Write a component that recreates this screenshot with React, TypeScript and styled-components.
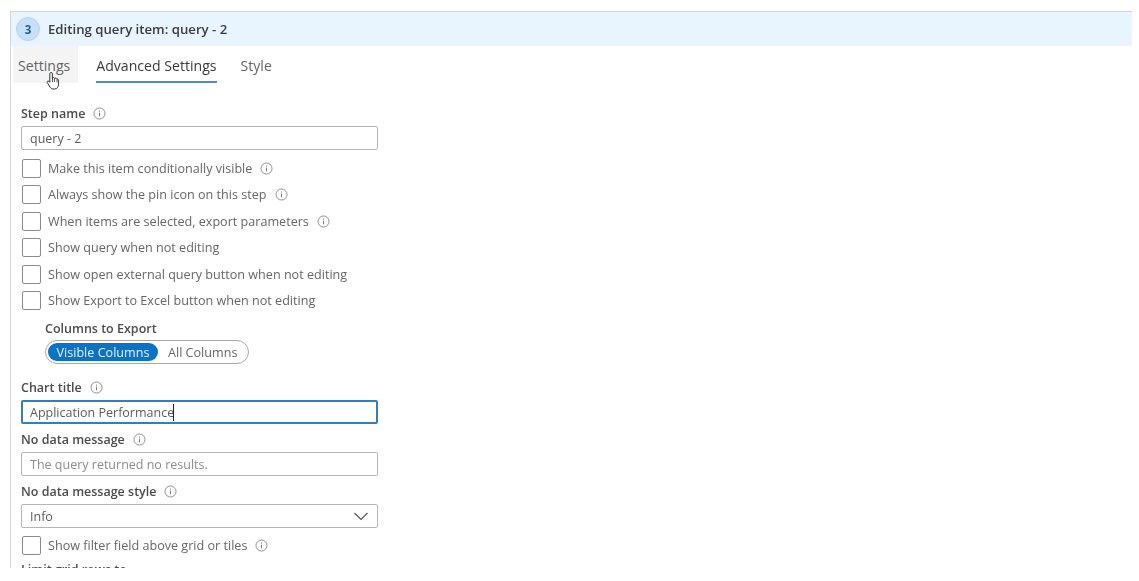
import React from "react";
import styled, { createGlobalStyle } from "styled-components";

const Global = createGlobalStyle`
  html, body { margin: 0; padding: 0; background: #fff; }
  body { font-family: "Open Sans", "Noto Sans", sans-serif; color: #4a4a4a; overflow: hidden; }
`;

const Frame = styled.div`
  height: 568px;
  padding: 11px 7px 0 10px;
  box-sizing: border-box;
  overflow: hidden;
  filter: blur(0.55px);
`;

const Panel = styled.div`
  height: 100%;
  border-left: 1px solid #d6d6dc;
  border-top: 1px solid #d3d3dc;
`;

const Header = styled.div`
  height: 34px;
  background: #e8f4fe;
  display: flex;
  align-items: center;
  gap: 8px;
  padding-left: 5px;
`;

const Badge = styled.span`
  width: 24px;
  height: 24px;
  border-radius: 50%;
  background: #c8e0f7;
  border: 1px solid #b4d4f0;
  box-sizing: border-box;
  color: #1a5f9e;
  font-size: 11.5px;
  font-weight: 700;
  display: flex;
  align-items: center;
  justify-content: center;
`;

const HeaderTitle = styled.span`
  font-size: 13.2px;
  font-weight: 600;
  color: #3c3c44;
`;

const Tabs = styled.div`
  display: flex;
  height: 37px;
  padding-left: 2px;
`;

const Tab = styled.div<{ $active?: boolean; $hover?: boolean }>`
  position: relative;
  font-size: 14.1px;
  line-height: 39px;
  padding: 0 ${(p) => (p.$hover ? "8px" : "12px")} 0 ${(p) => (p.$hover ? "5px" : "0")};
  margin-left: ${(p) => (p.$hover ? "0" : "12px")};
  margin-right: ${(p) => (p.$hover ? "6px" : "0")};
  color: ${(p) => (p.$active ? "#3a3a3a" : "#666")};
  font-weight: ${(p) => (p.$active ? 500 : 400)};
  background: ${(p) => (p.$hover ? "#f4f4f4" : "transparent")};
  ${(p) =>
    p.$active &&
    `&::after { content: ""; position: absolute; left: 0; right: 12px; bottom: 0; height: 2px; background: #4a90c8; }`}
`;

const Cursor = styled.svg`
  position: absolute;
  left: 33px;
  top: 25px;
  width: 16px;
  height: 20px;
`;

const Form = styled.div`
  display: flex;
  flex-direction: column;
  padding: 22px 0 0 10px;
  width: 357px;
`;

const Label = styled.div<{ $indent?: boolean }>`
  display: flex;
  align-items: center;
  gap: 8px;
  height: 17px;
  font-size: 12.5px;
  font-weight: 600;
  color: #4c4c4c;
  margin-left: ${(p) => (p.$indent ? "24px" : "0")};
`;

const Info = styled.svg`
  width: 13px;
  height: 13px;
  flex: none;
  color: #777;
`;

const Field = styled.div<{ $focus?: boolean; $placeholder?: boolean }>`
  height: 24px;
  box-sizing: border-box;
  border: 1px solid #b5b5b5;
  border-radius: 2px;
  display: flex;
  align-items: center;
  padding: 0 8px;
  font-size: 12.5px;
  background: #fff;
  margin-top: 4px;
  color: ${(p) => (p.$placeholder ? "#8c8c8c" : "#5c5c5c")};
  ${(p) => p.$focus && "border: 2px solid #2f7fc1; padding: 0 7px;"}
`;

const Caret = styled.span`
  display: inline-block;
  width: 1px;
  height: 17px;
  background: #222;
  margin-left: -1px;
`;

const SelectBox = styled(Field)`
  justify-content: space-between;
  padding-right: 8px;
`;

const Row = styled.div`
  display: flex;
  align-items: center;
  height: 26.5px;
  font-size: 12.6px;
  color: #666;
`;

const Checkbox = styled.span`
  width: 19px;
  height: 19px;
  box-sizing: border-box;
  border: 1.5px solid #8a8a8a;
  border-radius: 2px;
  margin: 0 7px 0 1px;
  flex: none;
`;

const RowText = styled.span`
  margin-right: 8px;
`;

const Checks = styled.div`
  margin-top: 5px;
  margin-bottom: 6px;
`;

const Pill = styled.div`
  margin: 3px 0 15px 24px;
  width: 204px;
  height: 24px;
  box-sizing: border-box;
  border: 1px solid #a8a8a8;
  border-radius: 12px;
  display: flex;
  align-items: center;
  padding: 0 2px;
  font-size: 12.6px;
  color: #666;
`;

const PillOn = styled.span`
  width: 110px;
  height: 18px;
  border-radius: 9px;
  background: #0b72c6;
  color: #e4f1fb;
  display: flex;
  align-items: center;
  justify-content: center;
  margin-right: 10px;
`;

const Section = styled.div<{ $top?: number }>`
  margin-top: ${(p) => p.$top ?? 0}px;
`;

const FilterRow = styled(Row)`
  margin-top: 4px;
`;

const Clipped = styled.div`
  height: 8px;
  margin-top: 2px;
  font-size: 12.5px;
  font-weight: 600;
  color: #4c4c4c;
  line-height: 17px;
`;

const InfoIcon = () => (
  <Info viewBox="0 0 16 16" fill="none" stroke="currentColor">
    <circle cx="8" cy="8" r="6.8" strokeWidth="1" />
    <path d="M8 7v4.4" strokeWidth="1.2" />
    <path d="M8 4.4v1.3" strokeWidth="1.2" />
  </Info>
);

const checks: [string, boolean][] = [
  ["Make this item conditionally visible", true],
  ["Always show the pin icon on this step", true],
  ["When items are selected, export parameters", true],
  ["Show query when not editing", false],
  ["Show open external query button when not editing", false],
  ["Show Export to Excel button when not editing", false],
];

export default function App() {
  return (
    <>
      <Global />
      <Frame>
        <Panel>
          <Header>
            <Badge>3</Badge>
            <HeaderTitle>Editing query item: query - 2</HeaderTitle>
          </Header>
          <Tabs>
            <Tab $hover>
              Settings
              <Cursor viewBox="0 0 16 20" fill="#fff" stroke="#333" strokeWidth="1">
                <path d="M5 1.5c.9 0 1.4.6 1.4 1.4v5.3l.1-1.2c.6-.7 1.8-.5 2 .4.6-.6 1.7-.4 2 .5.7-.4 1.7 0 1.8.9l.2 4.4c0 2.6-1.4 4.8-3.8 4.8H7c-1.4 0-2.3-.8-3-2L1.200 11.500c-.5-1 .6-1.900 1.600-1.300l1 1.100V3c0-.9.4-1.500 1.200-1.500z" />
                <path d="M6.500 7.500v3.500M8.500 7.500v3.500M11 8.200v3" strokeWidth=".8" />
              </Cursor>
            </Tab>
            <Tab $active>Advanced Settings</Tab>
            <Tab>Style</Tab>
          </Tabs>
          <Form>
            <Label>
              Step name <InfoIcon />
            </Label>
            <Field>query - 2</Field>
            <Checks>
              {checks.map(([text, info]) => (
                <Row key={text}>
                  <Checkbox />
                  <RowText>{text}</RowText>
                  {info && <InfoIcon />}
                </Row>
              ))}
            </Checks>
            <Label $indent>Columns to Export</Label>
            <Pill>
              <PillOn>Visible Columns</PillOn>
              All Columns
            </Pill>
            <Label>
              Chart title <InfoIcon />
            </Label>
            <Field $focus>
              Application Performance
              <Caret />
            </Field>
            <Section $top={7}>
              <Label>
                No data message <InfoIcon />
              </Label>
              <Field $placeholder>The query returned no results.</Field>
            </Section>
            <Section $top={7}>
              <Label>
                No data message style <InfoIcon />
              </Label>
              <SelectBox>
                Info
                <svg width="16" height="9" viewBox="0 0 16 9" fill="none" stroke="#555" strokeWidth="1.2">
                  <path d="M1.500 1l6.500 6.500L14.500 1" />
                </svg>
              </SelectBox>
            </Section>
            <FilterRow>
              <Checkbox />
              <RowText>Show filter field above grid or tiles</RowText>
              <InfoIcon />
            </FilterRow>
            <Clipped>Limit grid rows to</Clipped>
          </Form>
        </Panel>
      </Frame>
    </>
  );
}
